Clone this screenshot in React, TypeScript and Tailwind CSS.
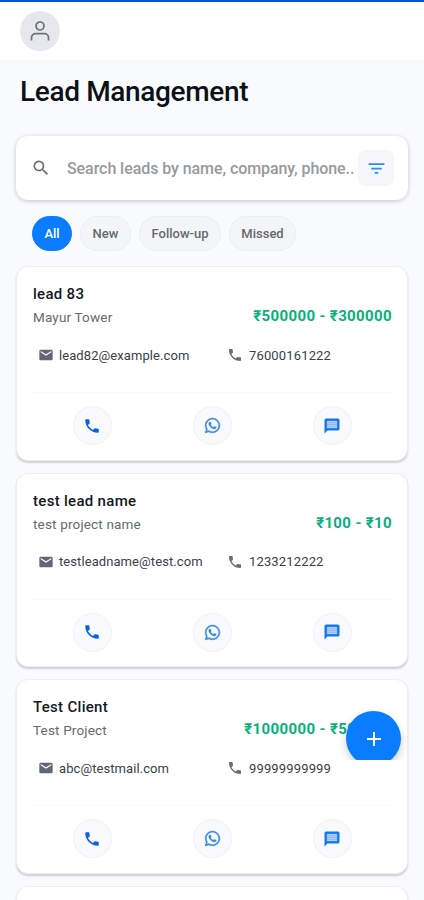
import React from "react";
import { MdEmail, MdPhone, MdSearch, MdFilterList, MdAdd } from "react-icons/md";
import { FaWhatsapp } from "react-icons/fa";

type Lead = { name: string; project: string; budget: string; email: string; phone: string };

const leads: Lead[] = [
  { name: "lead 83", project: "Mayur Tower", budget: "₹500000 - ₹300000", email: "lead82@example.com", phone: "76000161222" },
  { name: "test lead name", project: "test project name", budget: "₹100 - ₹10", email: "testleadname@test.com", phone: "1233212222" },
  { name: "Test Client", project: "Test Project", budget: "₹1000000 - ₹500000", email: "abc@testmail.com", phone: "99999999999" },
];

const cardClass =
  "shrink-0 rounded-[12px] border border-[#eceef0] bg-white shadow-[0_2px_2px_rgba(0,0,0,0.17)]";

function Action({ children }: { children: React.ReactNode }) {
  return (
    <button className="flex size-[39px] items-center justify-center rounded-full border border-[#f0f1f3] bg-[#f9fafb]">
      {children}
    </button>
  );
}

function MessageIcon() {
  return (
    <svg viewBox="0 0 24 24" className="size-[18px]">
      <path d="M4 2h16a2 2 0 0 1 2 2v12a2 2 0 0 1-2 2H6l-4 4V4a2 2 0 0 1 2-2z" className="fill-[#1677f2]" />
      <path d="M5.2 5.2h13.6v9.6H5.2z" className="fill-[#b4d1f7]" />
      <path d="M5.5 7.6h13M5.5 10h13M5.5 12.4h13" className="stroke-[#7fb0f4] stroke-1" />
    </svg>
  );
}

function LeadCard({ lead }: { lead: Lead }) {
  return (
    <article className={`${cardClass} h-[194.5px] px-[15px]`}>
      <div className="flex h-[66px] items-end justify-between pb-[4px]">
        <div className="pl-px">
          <h2 className="text-[15px] font-medium leading-[23px] tracking-[0.3px] text-[#15181e]">{lead.name}</h2>
          <p className="text-[13.5px] leading-[23px] tracking-[0.17px] text-[#666a70]">{lead.project}</p>
        </div>
        <p className="whitespace-nowrap pb-[1px] text-[15px] font-bold leading-[23px] tracking-[0.37px] text-[#08b07a]">{lead.budget}</p>
      </div>
      <div className="flex h-[60px] border-b border-[#f9f9fb] pt-[12px] text-[13px] leading-5 text-[#3b4048]">
        <div className="flex h-5 w-[190px] items-center gap-[5px] pl-[6px]">
          <MdEmail className="size-4 shrink-0 text-[#626775]" />
          <span className="pt-px tracking-[0.08px]">{lead.email}</span>
        </div>
        <div className="flex h-5 items-center gap-[6px] pl-[5px]">
          <MdPhone className="size-4 shrink-0 text-[#6a6d73]" />
          <span className="pt-px tracking-[0.15px]">{lead.phone}</span>
        </div>
      </div>
      <div className="grid h-[65px] grid-cols-3 place-items-center">
        <Action><MdPhone className="size-[18px] text-[#0b5fe4]" /></Action>
        <Action><FaWhatsapp className="size-[17px] stroke-current stroke-[12] text-[#3587e6]" /></Action>
        <Action><MessageIcon /></Action>
      </div>
    </article>
  );
}

const chips = [
  { label: "All", cls: "w-10 bg-[#0a7cff] border-[#0a7cff] text-white" },
  { label: "New", cls: "w-[51px] bg-[#f3f5f7] border-[#eceef0] text-[#666a70]" },
  { label: "Follow-up", cls: "w-[82px] bg-[#f3f5f7] border-[#eceef0] text-[#666a70]" },
  { label: "Missed", cls: "w-[67px] bg-[#f3f5f7] border-[#eceef0] text-[#666a70]" },
];

export default function App() {
  return (
    <div className="relative flex h-[900px] w-[424px] flex-col overflow-hidden bg-[#f9fafc] font-['Roboto','Liberation_Sans',sans-serif]">
      <header className="flex h-[60px] shrink-0 items-center border-t-2 border-[#0754d8] bg-white pl-5">
        <div className="flex size-10 items-center justify-center rounded-full bg-[#e5e8ec]">
          <svg viewBox="0 0 20 20" className="size-5 fill-none stroke-[#6e737b] stroke-[1.7]">
            <circle cx="10" cy="5" r="4" />
            <path d="M1.5 19.5v-2.8a4 4 0 0 1 4-4h9a4 4 0 0 1 4 4v2.8" />
          </svg>
        </div>
      </header>
      <h1 className="mt-3 h-[64px] shrink-0 pl-5 text-[28px] font-medium leading-[40px] tracking-[-0.35px] text-[#0c1118]">Lead Management</h1>
      <div className="mx-4 flex h-16 shrink-0 items-center rounded-[12px] bg-white pl-[15px] pr-[14px] shadow-[0_1px_4px_rgba(0,0,0,0.22)]">
        <MdSearch className="size-5 shrink-0 text-[#6b6e72]" />
        <span className="ml-4 min-w-0 flex-1 whitespace-nowrap pt-px text-[16px] font-medium tracking-[-0.07px] text-[#96999e]">Search leads by name, company, phone..</span>
        <button className="flex size-9 shrink-0 items-center justify-center rounded-[8px] bg-[#f4f6f8]">
          <MdFilterList className="size-[21px] text-[#3388f4]" />
        </button>
      </div>
      <div className="mt-4 mb-[15px] flex h-[35px] shrink-0 gap-2 pl-8">
        {chips.map((c) => (
          <button key={c.label} className={`flex items-center justify-center rounded-full border pt-px text-[13px] font-medium ${c.cls}`}>{c.label}</button>
        ))}
      </div>
      <main className="mx-4 flex flex-col gap-[12px]">
        {leads.map((l) => <LeadCard key={l.name} lead={l} />)}
        <div className={`${cardClass} h-[195px]`} />
      </main>
      <div className="absolute left-[338px] top-[704px] h-[56px] w-[80px] overflow-hidden">
        <button className="ml-[8px] mt-[7px] flex size-[55px] items-center justify-center rounded-full bg-[#0a7cff] text-white shadow-[0_4px_8px_rgba(0,0,0,0.2)]">
          <MdAdd className="size-6" />
        </button>
      </div>
    </div>
  );
}
